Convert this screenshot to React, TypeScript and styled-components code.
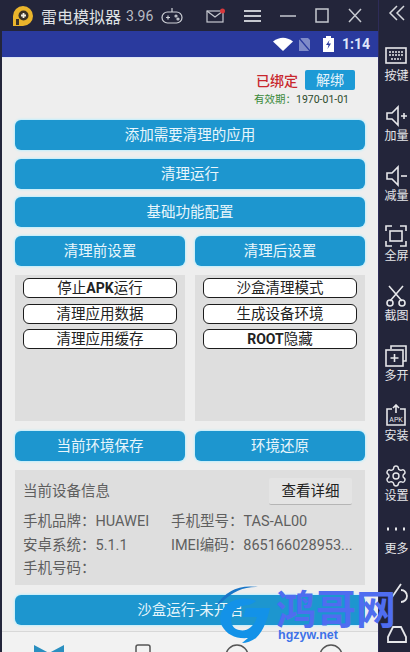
import React from "react";
import styled, { createGlobalStyle } from "styled-components";
import { Settings } from "lucide-react";

const GlobalStyle = createGlobalStyle`
  html, body {
    margin: 0;
    padding: 0;
    background: #23253a;
  }
  body {
    font-family: Roboto, "Noto Sans CJK SC", sans-serif;
  }
`;

const Shell = styled.div`
  position: relative;
  width: 410px;
  height: 652px;
  overflow: hidden;
  display: flex;
  flex-flow: column;
  background: #23253a;
`;

const TitleBar = styled.div`
  height: 31px;
  flex: none;
  display: flex;
  align-items: center;
  padding-left: 11px;
  color: #d6d8dc;
`;

const TitleText = styled.span`
  margin-left: 6px;
  font-size: 16px;
  color: #dfe1e4;
`;

const Version = styled.span`
  margin-left: 5px;
  font-size: 14px;
  color: #b9bcc4;
`;

const GamePad = styled.svg`
  margin-left: 7px;
`;

const WindowButtons = styled.div`
  margin-left: auto;
  display: flex;
  align-items: center;
  gap: 19px;
  padding-right: 48px;
`;

const Body = styled.div`
  flex: 1;
  min-height: 0;
  display: flex;
`;

const Phone = styled.div`
  width: 376px;
  margin-left: 2px;
  display: flex;
  flex-flow: column;
  background: #eeeeee;
`;

const StatusBar = styled.div`
  height: 26px;
  flex: none;
  background: #2a3a9e;
  display: flex;
  align-items: center;
  justify-content: flex-end;
  gap: 5px;
  padding-right: 8px;
  border-bottom: 1px solid #dfe6f5;
  color: #e8ecf8;
  font-size: 14px;
  font-weight: bold;
`;

const Battery = styled.svg`
  margin-left: 7px;
`;

const Clock = styled.span`
  margin-left: 3px;
  color: #dfe6fb;
`;

const Content = styled.div`
  flex: 1;
  min-height: 0;
  display: flex;
  flex-flow: column;
  padding: 12px 13px 0;
`;

const BindBlock = styled.div`
  align-self: flex-end;
  display: flex;
  flex-flow: column;
  align-items: flex-end;
  height: 50px;
  padding-right: 10px;
`;

const BindRow = styled.div`
  display: flex;
  align-items: center;
  gap: 7px;
`;

const BoundLabel = styled.span`
  font-size: 14px;
  font-weight: 500;
  color: #c8262c;
`;

const UnbindButton = styled.div`
  width: 50px;
  height: 20px;
  line-height: 20px;
  text-align: center;
  font-size: 14px;
  color: #e6f4fb;
  background: #1d9ad6;
  border-radius: 2px;
`;

const Expiry = styled.div`
  margin-top: 3px;
  margin-right: 6px;
  font-size: 10.5px;
  line-height: 13px;
  color: #3a8a3a;
`;

const ExpiryDate = styled.span`
  color: #2b4a2b;
`;

const Stack = styled.div`
  display: flex;
  flex-flow: column;
  gap: 8.5px;
`;

const ActionButton = styled.div`
  height: 30px;
  line-height: 31px;
  text-align: center;
  font-size: 14.5px;
  color: #e9f6fc;
  background: #1d96cf;
  border-radius: 6px;
  box-shadow: 0 0 2px 1px #bfeefc;
`;

const TwoCols = styled.div`
  display: grid;
  grid-template-columns: 170px 170px;
  column-gap: 10px;
  margin-top: 9px;
`;

const Column = styled.div`
  display: flex;
  flex-flow: column;
`;

const OptionPanel = styled.div`
  height: 146px;
  margin-top: 9px;
  padding: 3px 8px 0;
  box-sizing: border-box;
  background: #dedede;
  display: flex;
  flex-flow: column;
  gap: 5.5px;
`;

const Pill = styled.div`
  height: 20px;
  line-height: 19px;
  box-sizing: border-box;
  text-align: center;
  font-size: 14.5px;
  color: #222222;
  background: #ffffff;
  border: 1px solid #1c1c1c;
  border-radius: 6px;
`;

const LatinBold = styled.b`
  font-weight: 700;
  font-size: 14px;
`;

const FooterActions = styled(TwoCols)`
  margin-top: 10px;
`;

const InfoPanel = styled.div`
  height: 115px;
  margin-top: 9px;
  padding: 8px 8px 0;
  box-sizing: border-box;
  background: #dedede;
  color: #5f5f5f;
  font-size: 14.5px;
`;

const InfoHead = styled.div`
  display: flex;
  align-items: center;
  justify-content: space-between;
  height: 27px;
  margin-bottom: 4px;
`;

const InfoTitle = styled.span`
  margin-top: -5px;
`;

const DetailButton = styled.div`
  width: 83px;
  height: 27px;
  margin-right: 5px;
  line-height: 27px;
  text-align: center;
  color: #222222;
  background: #e4e4e4;
  border-bottom: 1px solid #b5b5b5;
  box-sizing: border-box;
  border-radius: 2px;
`;

const InfoGrid = styled.div`
  display: grid;
  grid-template-columns: 148px 1fr;
  grid-auto-rows: 23.5px;
  white-space: nowrap;
`;

const SandboxButton = styled(ActionButton)`
  margin-top: 10px;
`;

const BottomNav = styled.div`
  height: 20px;
  margin-top: auto;
  flex: none;
  border-top: 1px solid #d8d8d8;
  display: grid;
  grid-template-columns: repeat(4, 94px);
  justify-items: center;
  overflow: hidden;
  background: #f2f2f2;
`;

const NavIcon = styled.div`
  padding-top: 12px;
`;

const Sidebar = styled.div`
  width: 32px;
  flex: none;
  margin-top: -31px;
  padding-left: 4px;
  box-sizing: border-box;
  display: flex;
  flex-flow: column;
  align-items: center;
  background: #23253a;
  border-left: 1px solid #2e2c58;
`;

const ToolItem = styled.div<{ $height: number }>`
  display: flex;
  flex-flow: column;
  align-items: center;
  height: ${(p) => p.$height}px;
  flex: none;
  box-sizing: border-box;
  font-size: 12px;
  line-height: 13px;
  white-space: nowrap;
  color: #e6e7ea;
  svg {
    margin-bottom: 2px;
  }
`;

const Chevron = styled.div`
  height: 44px;
  flex: none;
  padding-top: 4px;
  box-sizing: border-box;
`;

const SystemKeys = styled.svg`
  margin-top: 6px;
  flex: none;
`;

const Watermark = styled.div`
  position: absolute;
  left: 208px;
  top: 584px;
  width: 200px;
  height: 64px;
`;

const WatermarkTitle = styled.div`
  position: absolute;
  left: 68px;
  top: 4px;
  font-size: 40px;
  line-height: 39px;
  font-weight: bold;
  white-space: nowrap;
  color: #4f6df0;
  font-family: "Noto Sans CJK SC", sans-serif;
`;

const WatermarkUrl = styled.div`
  position: absolute;
  left: 70px;
  top: 44px;
  font-size: 12.5px;
  line-height: 14px;
  font-family: "Liberation Sans", sans-serif;
  font-weight: bold;
  color: #3f72e8;
`;

const ic = { fill: "none", stroke: "#e6e7ea", strokeWidth: 1.6 };

const ToolIcon = ({ children }: { children: React.ReactNode }) => (
  <svg width="24" height="24" viewBox="0 0 24 24" {...ic}>
    {children}
  </svg>
);

const tools = [
  { label: "按键", h: 60, icon: <><rect x="2" y="4" width="20" height="15" /><path d="M5 8h14M5 11h14M7 15h10" strokeDasharray="2 1" /></> },
  { label: "加量", h: 60, icon: <><path d="M3 9h5l6-6v18l-6-6H3z" /><path d="M17 12h6M20 9v6" /></> },
  { label: "减量", h: 60, icon: <><path d="M3 9h5l6-6v18l-6-6H3z" /><path d="M17 12h6" /></> },
  { label: "全屏", h: 60, icon: <><path d="M2 7V2h6M16 2h6v5M2 17v5h6M16 22h6v-5" /><rect x="6" y="7" width="12" height="10" /></> },
  { label: "截图", h: 60, icon: <><path d="M5 2l13 15M19 2L6 17" /><circle cx="6" cy="19" r="3" /><circle cx="18" cy="19" r="3" /></> },
  { label: "多开", h: 60, icon: <><path d="M7 5V2h15v15h-3" /><rect x="2" y="6" width="17" height="16" /><path d="M10.500 10v8M6.500 14h8" /></> },
  { label: "安装", h: 60, icon: <><path d="M8 5H3v16h18V5h-5M12 9V1M9 4l3-3 3 3" /><text x="12" y="18" fontSize="7" fill="#e6e7ea" stroke="none" textAnchor="middle">APK</text></> },
  { label: "设置", h: 53, icon: <Settings width={24} height={24} strokeWidth={1.4} /> },
  { label: "更多", h: 59, icon: <path d="M3 12h2M11 12h2M19 12h2" strokeWidth="3" /> },
];

const App = () => (
  <>
    <GlobalStyle />
    <Shell>
      <TitleBar>
        <svg width="24" height="24" viewBox="0 0 24 24">
          <path d="M2 22V12a10 10 0 1 1 10 10z" fill="#eab52c" />
          <circle cx="12.500" cy="11.500" r="5" fill="#3a3226" />
          <path d="M12.500 9v5M10 11.500h5" stroke="#f3f0e4" strokeWidth="1.800" />
          <path d="M5 21v-6h3v6z" fill="#3a3226" />
        </svg>
        <TitleText>雷电模拟器</TitleText>
        <Version>3.96</Version>
        <GamePad width="24" height="20" viewBox="0 0 24 20" fill="none" stroke="#cfd2d8" strokeWidth="1.200">
          <rect x="2" y="6" width="20" height="11" rx="5.500" />
          <path d="M12 6V2M6 11.500h4M8 9.500v4" />
          <circle cx="16" cy="10" r="1" />
          <circle cx="18" cy="13" r="1" />
        </GamePad>
        <WindowButtons>
          <svg width="19" height="16" viewBox="0 0 19 16" fill="none" stroke="#c6c9d0" strokeWidth="1.200">
            <rect x="1" y="3" width="16" height="11" />
            <path d="M1 3l8 6 8-6" />
            <circle cx="16.500" cy="3" r="2.500" fill="#d8383c" stroke="none" />
          </svg>
          <svg width="17" height="14" viewBox="0 0 17 14" stroke="#c6c9d0" strokeWidth="1.800">
            <path d="M0 2h17M0 7h17M0 12h17" />
          </svg>
          <svg width="16" height="14" viewBox="0 0 16 14" stroke="#c6c9d0" strokeWidth="1.500">
            <path d="M0 7h16" />
          </svg>
          <svg width="14" height="15" viewBox="0 0 14 15" fill="none" stroke="#c6c9d0" strokeWidth="1.500">
            <rect x="1" y="1" width="12" height="13" />
          </svg>
          <svg width="14" height="15" viewBox="0 0 14 15" stroke="#c6c9d0" strokeWidth="1.500">
            <path d="M1 1l12 13M13 1L1 14" />
          </svg>
        </WindowButtons>
      </TitleBar>
      <Body>
        <Phone>
          <StatusBar>
            <svg width="20" height="14" viewBox="0 0 20 14">
              <path d="M0 4.500Q10-3 20 4.500L10 14z" fill="#ffffff" />
            </svg>
            <svg width="13" height="15" viewBox="0 0 13 15">
              <path d="M3 1h7l2 2v11H1V3z" fill="#7f8bc8" />
              <path d="M1 1l11 13" stroke="#2a3a9e" strokeWidth="1.200" />
            </svg>
            <Battery width="11" height="16" viewBox="0 0 11 16">
              <path d="M3 2V0h5v2h3v14H0V2z" fill="#ffffff" />
              <path d="M6.500 4L3 9h2.500L4.500 13 8 7.500H5.500z" fill="#2a3a9e" />
            </Battery>
            <Clock>1:14</Clock>
          </StatusBar>
          <Content>
            <BindBlock>
              <BindRow>
                <BoundLabel>已绑定</BoundLabel>
                <UnbindButton>解绑</UnbindButton>
              </BindRow>
              <Expiry>
                有效期：<ExpiryDate>1970-01-01</ExpiryDate>
              </Expiry>
            </BindBlock>
            <Stack>
              <ActionButton>添加需要清理的应用</ActionButton>
              <ActionButton>清理运行</ActionButton>
              <ActionButton>基础功能配置</ActionButton>
            </Stack>
            <TwoCols>
              <Column>
                <ActionButton>清理前设置</ActionButton>
                <OptionPanel>
                  <Pill>停止<LatinBold>APK</LatinBold>运行</Pill>
                  <Pill>清理应用数据</Pill>
                  <Pill>清理应用缓存</Pill>
                </OptionPanel>
              </Column>
              <Column>
                <ActionButton>清理后设置</ActionButton>
                <OptionPanel>
                  <Pill>沙盒清理模式</Pill>
                  <Pill>生成设备环境</Pill>
                  <Pill><LatinBold>ROOT</LatinBold>隐藏</Pill>
                </OptionPanel>
              </Column>
            </TwoCols>
            <FooterActions>
              <ActionButton>当前环境保存</ActionButton>
              <ActionButton>环境还原</ActionButton>
            </FooterActions>
            <InfoPanel>
              <InfoHead>
                <InfoTitle>当前设备信息</InfoTitle>
                <DetailButton>查看详细</DetailButton>
              </InfoHead>
              <InfoGrid>
                <span>手机品牌：HUAWEI</span>
                <span>手机型号：TAS-AL00</span>
                <span>安卓系统：5.1.1</span>
                <span>IMEI编码：865166028953...</span>
                <span>手机号码：</span>
              </InfoGrid>
            </InfoPanel>
            <SandboxButton>沙盒运行-未开启</SandboxButton>
          </Content>
          <BottomNav>
            <NavIcon>
              <svg width="32" height="20" viewBox="0 0 32 20">
                <path d="M1 1l15 8L31 1v18H1z" fill="#2a8fc0" />
              </svg>
            </NavIcon>
            <NavIcon>
              <svg width="18" height="20" viewBox="0 0 18 20" fill="none" stroke="#555" strokeWidth="1.500">
                <rect x="2" y="1" width="14" height="18" rx="2" />
              </svg>
            </NavIcon>
            <NavIcon>
              <svg width="24" height="20" viewBox="0 0 24 20" fill="none" stroke="#555" strokeWidth="1.500">
                <circle cx="12" cy="12" r="11" />
              </svg>
            </NavIcon>
            <NavIcon>
              <svg width="24" height="20" viewBox="0 0 24 20" fill="none" stroke="#555" strokeWidth="1.500">
                <circle cx="12" cy="12" r="11" />
              </svg>
            </NavIcon>
          </BottomNav>
        </Phone>
        <Sidebar>
          <Chevron>
            <svg width="18" height="18" viewBox="0 0 18 18" fill="none" stroke="#d6d8dc" strokeWidth="1.500">
              <path d="M9 2L2 9l7 7M16 2L9 9l7 7" />
            </svg>
          </Chevron>
          {tools.map((t) => (
            <ToolItem key={t.label} $height={t.h}>
              <ToolIcon>{t.icon}</ToolIcon>
              {t.label}
            </ToolItem>
          ))}
          <SystemKeys width="24" height="63" viewBox="0 0 24 63" fill="none" stroke="#e6e7ea" strokeWidth="1.800">
            <path d="M16 2L5 18M16 8a5 5 0 1 1 0 12" />
            <path d="M3 55l5-10h8l5 10v5H3z" />
          </SystemKeys>
        </Sidebar>
      </Body>
      <Watermark>
        <svg width="70" height="64" viewBox="0 0 70 64">
          <path d="M8 22Q22-1 50 3 30 2 14 18z" fill="#1976c8" />
          <path d="M48 17C26 8 6 26 14 42c5 9 14 13 26 12l-6 5c4 0 10-2 14-5 8-8 11-18 14-30H38l-3 9h14c-3 10-10 15-18 13C20 44 20 26 34 22c5-1 10-1 14-5z" fill="#1392e8" />
        </svg>
        <WatermarkTitle>鸿哥网</WatermarkTitle>
        <WatermarkUrl>hgzyw.net</WatermarkUrl>
      </Watermark>
    </Shell>
  </>
);

export default App;
